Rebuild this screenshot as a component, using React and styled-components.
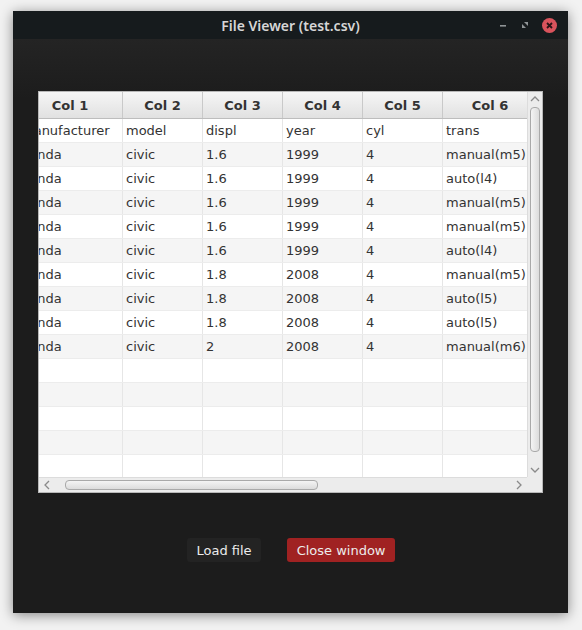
import React from 'react';
import styled, { createGlobalStyle } from 'styled-components';

const GlobalStyle = createGlobalStyle`
    html, body {
        margin: 0;
        padding: 0;
        background: #f2f2f2;
    }
`;

const Page = styled.div`
    width: 582px;
    height: 630px;
    padding: 11px 14px 17px 13px;
    box-sizing: border-box;
`;

const Window = styled.div`
    width: 555px;
    height: 602px;
    display: flex;
    flex-direction: column;
    background: #1c1c1c;
    box-shadow: 0 2px 12px rgba(0, 0, 0, 0.45);
`;

const TitleBar = styled.div`
    height: 28px;
    flex: none;
    display: grid;
    grid-template-columns: 1fr auto 1fr;
    align-items: center;
    background: #161b1d;
    font-family: 'Noto Sans', 'DejaVu Sans', sans-serif;
`;

const Title = styled.div`
    grid-column: 2;
    color: #d6d6d6;
    font-size: 14px;
    font-weight: 600;
`;

const Controls = styled.div`
    grid-column: 3;
    justify-self: end;
    display: flex;
    align-items: center;
    gap: 12px;
    padding-right: 11px;
`;

const Body = styled.div`
    flex: 1;
    display: flex;
    flex-direction: column;
    align-items: center;
    padding: 52px 25px 0;
    background: linear-gradient(#242424, #1c1c1c 60px);
`;

const TableFrame = styled.div`
    width: 505px;
    height: 402px;
    box-sizing: border-box;
    border: 1px solid #b8b8b8;
    background: #ececec;
    display: grid;
    grid-template-columns: 1fr 15px;
    grid-template-rows: 1fr 15px;
`;

const Viewport = styled.div`
    overflow: hidden;
    background: #ffffff;
    font-family: 'DejaVu Sans', sans-serif;
    font-size: 13px;
`;

const Sheet = styled.div`
    margin-left: -21px;
    width: 520px;
`;

const Row = styled.div`
    display: grid;
    grid-template-columns: 105px 80px 80px 80px 80px 95px;
    height: ${(p) => (p.$head ? 27 : 24)}px;
    box-sizing: border-box;
    background: ${(p) =>
        p.$head ? 'linear-gradient(#f6f6f6, #e1e1e1)' : p.$odd ? '#f5f5f5' : '#ffffff'};
    border-bottom: 1px solid ${(p) => (p.$head ? '#bdbdbd' : '#ececec')};
`;

const Cell = styled.div`
    display: flex;
    align-items: center;
    justify-content: ${(p) => (p.$head ? 'center' : 'flex-start')};
    padding: 0 3px;
    border-right: 1px solid ${(p) => (p.$head ? '#c9c9c9' : '#e6e6e6')};
    color: #333333;
    font-weight: ${(p) => (p.$head ? 'bold' : 'normal')};
    white-space: nowrap;
    overflow: hidden;
`;

const VBar = styled.div`
    display: grid;
    grid-template-rows: 14px 1fr 14px;
    justify-items: center;
    align-items: center;
    background: #ececec;
    border-left: 1px solid #dcdcdc;
`;

const HBar = styled.div`
    display: grid;
    grid-template-columns: 16px 1fr 16px;
    align-items: center;
    justify-items: center;
    background: #ececec;
    border-top: 1px solid #dcdcdc;
`;

const Track = styled.div`
    align-self: stretch;
    justify-self: stretch;
    display: flex;
    flex-direction: ${(p) => (p.$vertical ? 'column' : 'row')};
    padding: ${(p) => (p.$vertical ? '1px 2px 6px' : '2px 0 2px 10px')};
`;

const Thumb = styled.div`
    box-sizing: border-box;
    border: 1px solid #a9a9a9;
    border-radius: 4px;
    background: ${(p) =>
        p.$vertical
            ? 'linear-gradient(90deg, #f4f4f4, #dcdcdc)'
            : 'linear-gradient(#f4f4f4, #dcdcdc)'};
    ${(p) => (p.$vertical ? 'height: 345px; width: 100%;' : 'width: 253px; height: 100%;')}
`;

const Corner = styled.div`
    background: #ececec;
`;

const Buttons = styled.div`
    display: flex;
    gap: 26px;
    margin-top: 45px;
`;

const Button = styled.button`
    height: 24px;
    padding: 0 9px 0 10px;
    border: none;
    border-radius: 3px;
    background: ${(p) => (p.$danger ? '#a02222' : '#232323')};
    color: #ececec;
    font-family: 'DejaVu Sans', sans-serif;
    font-size: 13px;
`;

function Chevron({ dir }) {
    const paths = {
        up: 'M1 6 L5 2 L9 6',
        down: 'M1 2 L5 6 L9 2',
        left: 'M6 1 L2 5 L6 9',
        right: 'M2 1 L6 5 L2 9',
    };
    const vertical = dir === 'up' || dir === 'down';
    return (
        <svg width={vertical ? 10 : 8} height={vertical ? 8 : 10} viewBox={vertical ? '0 0 10 8' : '0 0 8 10'}>
            <path d={paths[dir]} fill="none" stroke="#8a8a8a" strokeWidth="1.3" />
        </svg>
    );
}

const headers = ['Col 1', 'Col 2', 'Col 3', 'Col 4', 'Col 5', 'Col 6'];

const data = [
    ['manufacturer', 'model', 'displ', 'year', 'cyl', 'trans'],
    ['honda', 'civic', '1.6', '1999', '4', 'manual(m5)'],
    ['honda', 'civic', '1.6', '1999', '4', 'auto(l4)'],
    ['honda', 'civic', '1.6', '1999', '4', 'manual(m5)'],
    ['honda', 'civic', '1.6', '1999', '4', 'manual(m5)'],
    ['honda', 'civic', '1.6', '1999', '4', 'auto(l4)'],
    ['honda', 'civic', '1.8', '2008', '4', 'manual(m5)'],
    ['honda', 'civic', '1.8', '2008', '4', 'auto(l5)'],
    ['honda', 'civic', '1.8', '2008', '4', 'auto(l5)'],
    ['honda', 'civic', '2', '2008', '4', 'manual(m6)'],
    ['', '', '', '', '', ''],
    ['', '', '', '', '', ''],
    ['', '', '', '', '', ''],
    ['', '', '', '', '', ''],
    ['', '', '', '', '', ''],
];

function App() {
    return (
        <Page>
            <GlobalStyle />
            <Window>
                <TitleBar>
                    <Title>File Viewer (test.csv)</Title>
                    <Controls>
                        <svg width="10" height="10" viewBox="0 0 10 10">
                            <rect x="2" y="5" width="6" height="1.6" fill="#8f9496" />
                        </svg>
                        <svg width="10" height="10" viewBox="0 0 10 10">
                            <path d="M4 2 H8 V6 Z M6 8 H2 V4 Z" fill="#8f9496" />
                        </svg>
                        <svg width="15" height="15" viewBox="0 0 15 15">
                            <circle cx="7.5" cy="7.5" r="7.5" fill="#d9535c" />
                            <path d="M5 5 L10 10 M10 5 L5 10" stroke="#2a1416" strokeWidth="1.8" />
                        </svg>
                    </Controls>
                </TitleBar>
                <Body>
                    <TableFrame>
                        <Viewport>
                            <Sheet>
                                <Row $head>
                                    {headers.map((h) => (
                                        <Cell key={h} $head>{h}</Cell>
                                    ))}
                                </Row>
                                {data.map((row, i) => (
                                    <Row key={i} $odd={i % 2 === 1}>
                                        {row.map((value, j) => (
                                            <Cell key={j}>{value}</Cell>
                                        ))}
                                    </Row>
                                ))}
                            </Sheet>
                        </Viewport>
                        <VBar>
                            <Chevron dir="up" />
                            <Track $vertical>
                                <Thumb $vertical />
                            </Track>
                            <Chevron dir="down" />
                        </VBar>
                        <HBar>
                            <Chevron dir="left" />
                            <Track>
                                <Thumb />
                            </Track>
                            <Chevron dir="right" />
                        </HBar>
                        <Corner />
                    </TableFrame>
                    <Buttons>
                        <Button>Load file</Button>
                        <Button $danger>Close window</Button>
                    </Buttons>
                </Body>
            </Window>
        </Page>
    );
}

export default App;
